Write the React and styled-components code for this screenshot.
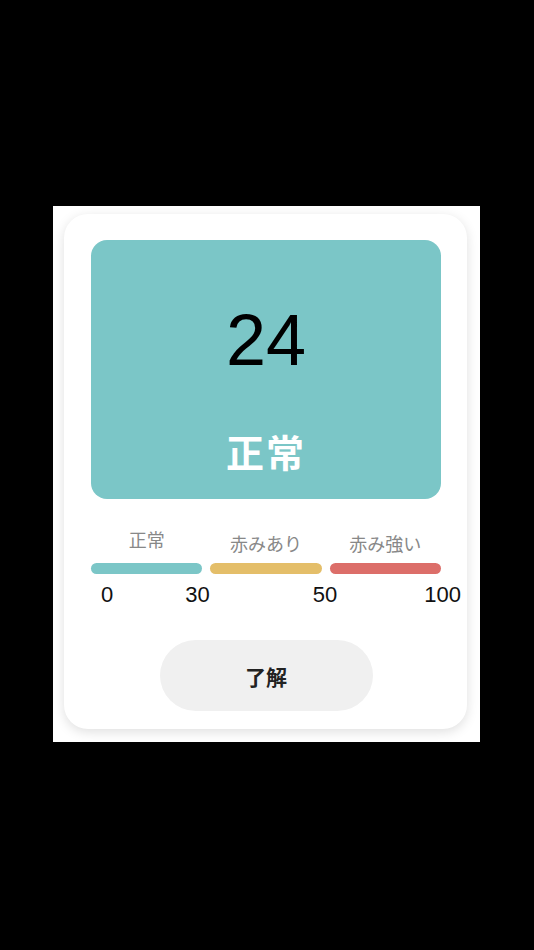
import React from 'react';
import styled, { createGlobalStyle } from 'styled-components';

const GlobalStyle = createGlobalStyle`
  html, body {
    margin: 0;
    padding: 0;
    background: #000;
  }
  body {
    font-family: "Noto Sans CJK JP", "Liberation Sans", sans-serif;
  }
`;

// redness scale bands
const bands = [
  { label: '正常', color: '#7bc6c7', lift: true },
  { label: '赤みあり', color: '#e4be69' },
  { label: '赤み強い', color: '#dc6e69' },
];

const ticks = [
  { value: '0', gap: 10 },
  { value: '30', gap: 72 },
  { value: '50', gap: 103 },
  { value: '100', gap: 87 },
];

const ScoreModal = ({ score, status }) => {
  return (
    <Screen>
      <Sheet>
        <Card>
          <ScoreBox>
            <Score>{score}</Score>
            <Status>{status}</Status>
          </ScoreBox>

          <Scale>
            {bands.map((b) => (
              <Band key={b.label}>
                <BandLabel $lift={b.lift}>{b.label}</BandLabel>
                <Bar $color={b.color} />
              </Band>
            ))}
          </Scale>

          <Ticks>
            {ticks.map((t) => (
              <Tick key={t.value} $gap={t.gap}>{t.value}</Tick>
            ))}
          </Ticks>

          <OkButton type="button">了解</OkButton>
        </Card>
      </Sheet>
    </Screen>
  );
};

const App = () => {
  return (
    <>
      <GlobalStyle />
      <ScoreModal score={24} status="正常" />
    </>
  );
};

export default App;

const Screen = styled.div`
  min-height: 100vh;
  box-sizing: border-box;
  padding: 206px 0 0 53px;
  display: flex;
  align-items: flex-start;
`;

const Sheet = styled.div`
  width: 427px;
  box-sizing: border-box;
  background: #fff;
  padding: 8px 13px 13px 11px;
`;

const Card = styled.div`
  width: 403px;
  box-sizing: border-box;
  background: #fff;
  border-radius: 24px;
  box-shadow: 0 3px 12px rgba(0, 0, 0, 0.13);
  padding: 26px 26px 18px 27px;
  display: flex;
  flex-direction: column;
`;

const ScoreBox = styled.div`
  height: 259px;
  box-sizing: border-box;
  background: #7bc6c7;
  border-radius: 16px;
  padding-top: 64px;
  display: flex;
  flex-direction: column;
  align-items: center;
`;

const Score = styled.div`
  font-family: "Liberation Sans", Arial, sans-serif;
  font-size: 72px;
  line-height: 1;
  color: #000;
`;

const Status = styled.div`
  margin-top: 56px;
  font-size: 38px;
  line-height: 1;
  font-weight: 700;
  letter-spacing: 2px;
  color: #fff;
`;

const Scale = styled.div`
  margin-top: 27px;
  display: grid;
  grid-template-columns: repeat(3, 1fr);
  column-gap: 8px;
  width: 350px;
`;

const Band = styled.div`
  display: flex;
  flex-direction: column;
  align-items: center;
  justify-content: flex-end;
`;

const BandLabel = styled.div`
  font-size: 18px;
  color: #888;
  margin-bottom: ${(p) => (p.$lift ? '11px' : '7px')};
`;

const Bar = styled.div`
  width: 100%;
  height: 11px;
  border-radius: 6px;
  background: ${(p) => p.$color};
`;

const Ticks = styled.div`
  display: flex;
  margin-top: 8px;
  font-family: "Liberation Sans", Arial, sans-serif;
  font-size: 22px;
  color: #111;
`;

const Tick = styled.span`
  margin-left: ${(p) => p.$gap}px;
`;

const OkButton = styled.button`
  align-self: center;
  margin-top: 32px;
  width: 213px;
  height: 71px;
  border: none;
  border-radius: 36px;
  background: #f0f0f0;
  font-family: "Noto Sans CJK JP", sans-serif;
  font-size: 21px;
  font-weight: 700;
  color: #222;
  cursor: pointer;
`;
